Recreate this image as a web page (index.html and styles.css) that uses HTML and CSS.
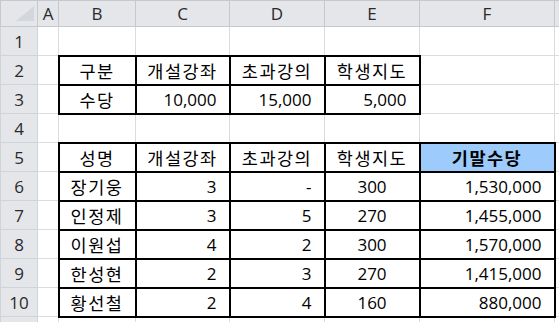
FILE: index.html
```html
<!DOCTYPE html>
<html lang="ko">
<head>
<meta charset="utf-8">
<title>기말수당</title>
<link rel="stylesheet" href="styles.css">
</head>
<body>
<div class="sheet">
<table class="grid">
<colgroup>
<col class="w-rh"><col class="w-a"><col class="w-b"><col class="w-c"><col class="w-d"><col class="w-e"><col class="w-f"><col class="w-g">
</colgroup>
<thead>
<tr class="hdr">
<th class="corner"><svg width="18" height="15" viewBox="0 0 18 15"><polygon points="18,0 18,15 0,15" fill="#d3d6da"/></svg></th>
<th>A</th><th>B</th><th>C</th><th>D</th><th>E</th><th>F</th><th></th>
</tr>
</thead>
<tbody>
<tr><th>1</th><td></td><td></td><td></td><td></td><td></td><td></td><td></td></tr>
<tr><th>2</th><td></td><td class="b ctr ko">구분</td><td class="b ctr ko">개설강좌</td><td class="b ctr ko">초과강의</td><td class="b ctr ko">학생지도</td><td></td><td></td></tr>
<tr><th>3</th><td></td><td class="b ctr ko">수당</td><td class="b num">10,000</td><td class="b num">15,000</td><td class="b num">5,000</td><td></td><td></td></tr>
<tr><th>4</th><td></td><td></td><td></td><td></td><td></td><td></td><td></td></tr>
<tr><th>5</th><td></td><td class="b ctr ko">성명</td><td class="b ctr ko">개설강좌</td><td class="b ctr ko">초과강의</td><td class="b ctr ko">학생지도</td><td class="b ctr ko hl">기말수당</td><td></td></tr>
<tr><th>6</th><td></td><td class="b ctr ko">장기웅</td><td class="b num">3</td><td class="b num">-</td><td class="b ctr">300</td><td class="b num">1,530,000</td><td></td></tr>
<tr><th>7</th><td></td><td class="b ctr ko">인정제</td><td class="b num">3</td><td class="b num">5</td><td class="b ctr">270</td><td class="b num">1,455,000</td><td></td></tr>
<tr><th>8</th><td></td><td class="b ctr ko">이원섭</td><td class="b num">4</td><td class="b num">2</td><td class="b ctr">300</td><td class="b num">1,570,000</td><td></td></tr>
<tr><th>9</th><td></td><td class="b ctr ko">한성현</td><td class="b num">2</td><td class="b num">3</td><td class="b ctr">270</td><td class="b num">1,415,000</td><td></td></tr>
<tr><th>10</th><td></td><td class="b ctr ko">황선철</td><td class="b num">2</td><td class="b num">4</td><td class="b ctr">160</td><td class="b num">880,000</td><td></td></tr>
<tr><th></th><td></td><td></td><td></td><td></td><td></td><td></td><td></td></tr>
</tbody>
</table>
</div>
</body>
</html>
```
FILE: styles.css
```css
html, body {
  margin: 0;
  padding: 0;
  background: #fff;
}
.sheet {
  width: 559px;
  height: 322px;
  overflow: hidden;
}
.grid {
  border-collapse: collapse;
  table-layout: fixed;
  width: 604px;
  font-family: "Open Sans", "Noto Sans CJK KR", sans-serif;
  font-size: 17px;
  color: #000;
}
.w-rh { width: 37px; }
.w-a { width: 21px; }
.w-b { width: 77px; }
.w-c { width: 94px; }
.w-d { width: 95px; }
.w-e { width: 95px; }
.w-f { width: 135px; }
.w-g { width: 50px; }
.grid tr { height: 29px; }
.grid tr.hdr { height: 26px; }
.grid th {
  background: #e4e6ea;
  border: 1px solid #c5c9ce;
  color: #2a2a2a;
  font-weight: normal;
  padding: 0;
  text-align: center;
  vertical-align: middle;
}
.grid tbody th {
  border-color: #d0d3d7;
}
.grid td {
  border: 1px solid #dadcdd;
  padding: 0;
  vertical-align: middle;
  white-space: nowrap;
  overflow: hidden;
}
.corner {
  text-align: right;
}
.corner svg {
  display: block;
  margin: 3px 3px 3px auto;
}
.grid td.b {
  border: 2px solid #000;
}
.ctr { text-align: center; }
.num { text-align: right; padding-right: 12px !important; }
.ko {
  font-size: 17.5px;
  letter-spacing: 1.5px;
}
.hl {
  background: #9ccbfc;
  font-weight: bold;
}
```
